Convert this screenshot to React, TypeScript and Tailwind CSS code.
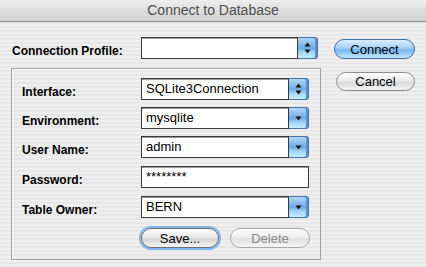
import React from 'react';

const font = { fontFamily: '"Liberation Sans", Arial, sans-serif' };

const Arrows = ({ double }: { double?: boolean }) => (
  <div className="w-[20px] h-full flex items-center justify-center rounded-r-[3px] border border-l-0 border-[#4773ab] bg-[linear-gradient(180deg,#b3d6f6_0%,#7bb3ea_40%,#6aa8e6_50%,#9dd2f6_70%,#c8efff_100%)] shadow-[inset_-2px_0_0_#5a8fd0]">
    {double ? (
      <svg width="7" height="12" viewBox="0 0 7 12">
        <path d="M3.5 0.5 L6.5 4.5 H0.5 Z" fill="#111" />
        <path d="M3.5 11.5 L6.5 7.5 H0.5 Z" fill="#111" />
      </svg>
    ) : (
      <svg width="7" height="5" viewBox="0 0 7 5">
        <path d="M0.5 0.5 H6.5 L3.5 4.5 Z" fill="#111" />
      </svg>
    )}
  </div>
);

const Field = ({ value, width, arrows }: { value: string; width: string; arrows?: 'single' | 'double' }) => (
  <div className="flex h-full">
    <div className={`${width} h-full bg-white border border-[#3a3a3a] shadow-[inset_0_1px_0_#9a9a9a] flex items-center pl-[4px] text-[13px] text-black`}>
      {value}
    </div>
    {arrows && <Arrows double={arrows === 'double'} />}
  </div>
);

const Row = ({ label, children }: { label: string; children: React.ReactNode }) => (
  <div className="flex items-center h-[22px]">
    <div className="w-[119px] pt-[5px] text-[12px] font-bold text-black">{label}</div>
    {children}
  </div>
);

const App = () => {
  return (
    <div style={font} className="w-[426px] h-[267px] overflow-hidden bg-[repeating-linear-gradient(180deg,#efefef_0px,#efefef_2px,#e7e7e7_2px,#e7e7e7_4px)]">
      <div className="h-[22px] border-b border-[#8a8a8a] bg-[linear-gradient(180deg,#eeeeee_0%,#dcdcdc_60%,#d2d2d2_100%)] flex items-center justify-center text-[14px] text-[#4d4d4d]">
        Connect to Database
      </div>

      <div className="flex pl-[11px] pt-[15px]">
        <div className="w-[310px]">
          <div className="flex items-center h-[22px]">
            <div className="w-[130px] pl-[1px] pt-[5px] text-[12px] font-bold text-black">Connection Profile:</div>
            <Field value="" width="w-[157px]" arrows="double" />
          </div>

          <div className="mt-[9px] h-[192px] border border-[#a2a2a2] shadow-[inset_1px_1px_0_#f8f8f8] pl-[10px] pt-[9px]">
            <Row label="Interface:">
              <Field value="SQLite3Connection" width="w-[148px]" arrows="double" />
            </Row>
            <div className="mt-[7px]">
              <Row label="Environment:">
                <Field value="mysqlite" width="w-[148px]" arrows="single" />
              </Row>
            </div>
            <div className="mt-[7px]">
              <Row label="User Name:">
                <Field value="admin" width="w-[148px]" arrows="single" />
              </Row>
            </div>
            <div className="mt-[8px]">
              <Row label="Password:">
                <Field value="********" width="w-[168px]" />
              </Row>
            </div>
            <div className="mt-[8px]">
              <Row label="Table Owner:">
                <Field value="BERN" width="w-[148px]" arrows="single" />
              </Row>
            </div>
            <div className="flex mt-[10px] pl-[119px] gap-[11px]">
              <button className="w-[78px] h-[20px] rounded-full border border-[#6e6e6e] shadow-[0_0_0_2px_#7fb6ef] bg-[linear-gradient(180deg,#fdfdfd_0%,#ececec_45%,#d6d6d6_55%,#f4f4f4_100%)] text-[13px] text-black leading-none">
                Save...
              </button>
              <button className="w-[80px] h-[20px] rounded-full border border-[#a8a8a8] bg-[linear-gradient(180deg,#fbfbfb_0%,#efefef_45%,#e0e0e0_55%,#f6f6f6_100%)] text-[13px] text-[#8a8a8a] leading-none">
                Delete
              </button>
            </div>
          </div>
        </div>

        <div className="ml-[13px] pt-[2px] flex flex-col items-end">
          <button className="w-[81px] h-[20px] rounded-full border border-[#3e6da6] bg-[linear-gradient(180deg,#d9eefe_0%,#a6d0f5_45%,#74b4ee_55%,#c4e8fe_100%)] text-[13px] text-black leading-none">
            Connect
          </button>
          <button className="mt-[13px] w-[79px] h-[19px] rounded-full border border-[#8e8e8e] bg-[linear-gradient(180deg,#fdfdfd_0%,#ececec_45%,#d8d8d8_55%,#f5f5f5_100%)] text-[13px] text-black leading-none">
            Cancel
          </button>
        </div>
      </div>
    </div>
  );
};

export default App;
